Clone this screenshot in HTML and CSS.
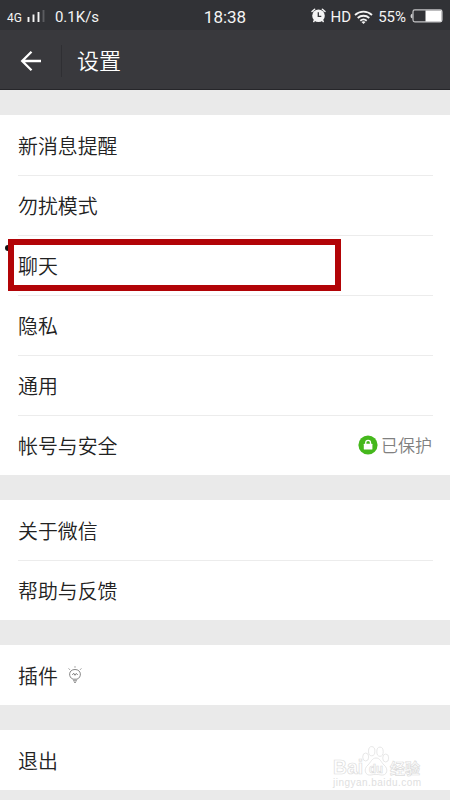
FILE: index.html
```html
<!DOCTYPE html>
<html lang="zh-CN">
<head>
  <meta charset="UTF-8">
  <meta name="viewport" content="width=device-width, initial-scale=1.0">
  <title>设置</title>
  <link rel="stylesheet" href="styles.css">
</head>
<body>
  <div class="statusbar">
    <div class="status-left">
      <span class="net">4G</span>
      <svg class="signal" width="18" height="13" viewBox="0 0 18 13">
        <path d="M1.5 7v5M6.5 4.5V12M11.5 2v10" stroke="#f4f4f4" stroke-width="1.9"/>
        <path d="M16.5 0v12" stroke="#5b5c60" stroke-width="1.9"/>
      </svg>
      <span class="speed">0.1K/s</span>
    </div>
    <span class="clock">18:38</span>
    <div class="status-right">
      <svg class="alarm" width="15" height="15" viewBox="0 0 15 15">
        <circle cx="7.5" cy="7.8" r="6.3" fill="#f4f4f4"/>
        <path d="M1 3.5L3.6 1.3M14 3.5l-2.6-2.2M3.600 12.200l-.8 1.300M11.400 12.200l.8 1.300" stroke="#f4f4f4" stroke-width="1.500" stroke-linecap="round"/>
        <path d="M7.300 4.200v4.200h3" fill="none" stroke="#333438" stroke-width="1.300"/>
      </svg>
      <span class="hd">HD</span>
      <svg class="wifi" width="19" height="14" viewBox="0 0 19 14">
        <path d="M1 5c4.800-4.400 12.200-4.400 17 0M3.700 8c3.300-3 8.300-3 11.600 0M6.300 10.700c1.900-1.600 4.500-1.600 6.400 0" fill="none" stroke="#f4f4f4" stroke-width="1.800"/>
        <path d="M7.500 12q2-1.300 4 0l-2 2z" fill="#f4f4f4"/>
      </svg>
      <span class="percent">55%</span>
      <svg class="battery" width="33" height="14" viewBox="0 0 33 14">
        <rect x="3" y=".9" width="29" height="12" rx="1.800" fill="none" stroke="#c4c4c6" stroke-width="1.200"/>
        <path d="M2.400 4.500Q.5 5 .5 7t1.900 2.500z" fill="#d0d0d2"/>
        <rect x="15.500" y="1.500" width="16" height="11" fill="#fff"/>
      </svg>
    </div>
  </div>

  <header class="titlebar">
    <svg class="back" width="22" height="22" viewBox="0 0 22 22">
      <path d="M11.500 1.700L2.200 11l9.300 9.300M2.500 11H21" fill="none" stroke="#fff" stroke-width="2.300"/>
    </svg>
    <h1>设置</h1>
  </header>

  <main>
    <ul class="group">
      <li>新消息提醒</li>
      <li>勿扰模式</li>
      <li class="marked">聊天</li>
      <li>隐私</li>
      <li>通用</li>
      <li>帐号与安全
        <span class="state">
          <svg width="20" height="20" viewBox="0 0 20 20">
            <circle cx="10" cy="10" r="9.600" fill="#45b81c"/>
            <rect x="5.800" y="8.700" width="8.600" height="5.800" rx=".5" fill="#fff"/>
            <path d="M7.700 9V7.700a2.400 2.400 0 0 1 4.800 0V9" fill="none" stroke="#fff" stroke-width="1.300"/>
          </svg>
          已保护
        </span>
      </li>
    </ul>
    <ul class="group">
      <li>关于微信</li>
      <li>帮助与反馈</li>
    </ul>
    <ul class="group">
      <li>插件
        <svg class="bulb" width="14" height="17" viewBox="0 0 14 17">
          <path d="M5 13.200C.2 11.500.2 3.500 7 3.500s6.800 8 2 9.700zM5 14.800h4M6 16.300h2" fill="none" stroke="#777" stroke-width=".9"/>
          <path d="M4.300 9l1.400-1.800L7 9.300l1.300-1.900L9.700 9M7 .3v1.300M.7 2.500l1.100 1.200M13.300 2.500l-1.100 1.200" fill="none" stroke="#777" stroke-width=".9"/>
        </svg>
      </li>
    </ul>
    <ul class="group">
      <li>退出</li>
    </ul>
  </main>

  <svg class="watermark" width="100" height="46" viewBox="0 0 100 46">
    <g fill="#fff" stroke="#dcdcdc" stroke-width=".7">
      <text class="wm-logo" x="1" y="30" textLength="30" lengthAdjust="spacingAndGlyphs">Bai</text>
      <path d="M44 14c-4 0-5 4-8 7-5 4-3 11 3 10 4-.8 6-.8 10 0 6 1 8-6 3-10-3-3-4-7-8-7z"/>
      <ellipse cx="33.700" cy="13" rx="3" ry="4"/>
      <ellipse cx="39.700" cy="7.200" rx="3.200" ry="4.600"/>
      <ellipse cx="48" cy="7.700" rx="3.200" ry="4.600"/>
      <ellipse cx="53.700" cy="14" rx="3" ry="4"/>
      <text class="wm-du" x="37" y="28.500" textLength="14" lengthAdjust="spacingAndGlyphs">du</text>
      <text class="wm-cn" x="58" y="30" textLength="30">经验</text>
    </g>
    <text class="wm-url" x="1" y="42" textLength="88">jingyan.baidu.com</text>
  </svg>
</body>
</html>
```
FILE: styles.css
```css
*,
*::before,
*::after {
  box-sizing: border-box;
}
body {
  margin: 0;
  height: 800px;
  overflow: hidden;
  position: relative;
  background: #eaeaea;
  color: #222;
  font-family: Roboto, "Noto Sans CJK SC", sans-serif;
}
.statusbar {
  height: 30px;
  padding: 1px 7px 1px;
  display: grid;
  grid-template-columns: 1fr auto 1fr;
  align-items: center;
  background: #313236;
  color: #f4f4f4;
  font-size: 15px;
  line-height: 28px;
}
.status-left,
.status-right {
  display: flex;
  align-items: center;
}
.status-right {
  justify-content: flex-end;
}
.net {
  font-size: 12px;
  padding-top: 3px;
}
.signal {
  margin: 0 10px 0 5px;
}
.clock {
  font-size: 17px;
}
.alarm {
  margin-top: -2px;
}
.hd {
  margin-left: 5px;
}
.wifi {
  margin: 0 5px 0 3px;
}
.battery {
  margin-top: -2px;
  margin-left: 4px;
}
.titlebar {
  height: 60px;
  display: flex;
  align-items: center;
  background: #39393d;
  border-bottom: 1px solid #26262a;
}
.back {
  margin: 2px 0 0 20px;
}
.titlebar h1 {
  margin: 2px 0 0 19px;
  padding: 1px 0 0 15px;
  border-left: 1px solid #2f2f33;
  color: #fff;
  font-size: 22px;
  font-weight: 350;
  line-height: 31px;
}
main {
  padding-top: 25px;
}
.group {
  list-style: none;
  margin: 0 0 25px;
  padding: 0 17px 0 18px;
  background: #fff;
}
.group li {
  height: 60px;
  display: flex;
  align-items: center;
  position: relative;
  font-size: 19.9px;
  font-weight: 350;
}
.group li + li {
  border-top: 1px solid #ececec;
}
.state {
  margin-left: auto;
  padding-bottom: 2px;
  display: flex;
  align-items: center;
  gap: 3px;
  color: #808080;
  font-size: 17px;
  position: relative;
  left: -1px;
}
.bulb {
  margin: -1px 0 0 10px;
}
/* red frame over the chat row */
.marked::after {
  content: "";
  position: absolute;
  left: -10px;
  top: 3px;
  width: 333px;
  height: 52px;
  border: 6px solid #b20407;
}
.marked::before {
  content: "";
  position: absolute;
  left: -13px;
  top: 9px;
  width: 6px;
  height: 6px;
  border-radius: 50%;
  background: #111;
}
.watermark {
  position: absolute;
  left: 332px;
  top: 744px;
}
.wm-logo {
  font: bold 20px "Liberation Sans", sans-serif;
}
.wm-du {
  font: bold 13px "Liberation Sans", sans-serif;
}
.wm-cn {
  font: bold 15px "Noto Sans CJK SC", sans-serif;
}
.wm-url {
  font: 10px "Liberation Sans", sans-serif;
  fill: #e0e0e0;
}
```
